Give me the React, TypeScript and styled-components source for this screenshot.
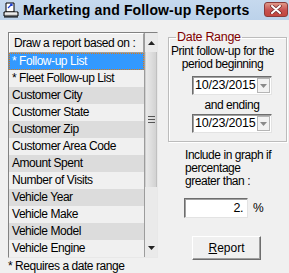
import styled, { createGlobalStyle } from 'styled-components'

const GlobalStyle = createGlobalStyle`
	html, body {
		margin: 0;
		padding: 0;
		background: #f0f0f0;
	}
`

const UI_FONT = `"Liberation Sans", Arial, sans-serif`

const Window = styled.div`
	width: 289px;
	height: 273px;
	overflow: hidden;
	background: #f0f0f0;
	font-family: ${UI_FONT};
	font-size: 12px;
	letter-spacing: -0.45px;
	line-height: 13px;
	text-align: left;
	color: #000;
	display: flex;
	flex-direction: column;
`
const TitleBar = styled.div`
	height: 20px;
	flex: none;
	display: flex;
	align-items: center;
	padding-left: 3px;
	background: linear-gradient(#c6d9ee, #bcd2ea);
`
const Title = styled.div`
	margin-left: 4px;
	font-weight: bold;
	font-size: 14px;
	letter-spacing: 0.15px;
	flex: 1;
	white-space: nowrap;
`
const CloseButton = styled.div`
	width: 22px;
	height: 13px;
	margin-right: 1px;
	margin-top: -2px;
	border: 1px solid #8a3a3a;
	border-radius: 3px;
	background: linear-gradient(#e09a8a, #c75050 55%, #c2473f);
	display: flex;
	align-items: center;
	justify-content: center;
`
const Body = styled.div`
	flex: 1;
	display: flex;
	padding: 12px 0 0 8px;
	gap: 10px;
`
const LeftCol = styled.div`
	display: flex;
	flex-direction: column;
	width: 150px;
`
const ListBox = styled.div`
	height: 226px;
	box-sizing: border-box;
	display: flex;
	border: 1px solid;
	border-color: #828282 #e8e8e8 #e8e8e8 #828282;
`
const ListInner = styled.div`
	width: 135px;
	display: flex;
	flex-direction: column;
`
const ListHeader = styled.div`
	height: 20px;
	box-sizing: border-box;
	padding-left: 4px;
	display: flex;
	align-items: center;
	border: 1px solid;
	border-color: #fff #a0a0a0 #a0a0a0 #fff;
	white-space: nowrap;
`
const Row = styled.div<{ $shade: 'sel' | 'grey' | 'light' }>`
	height: 17px;
	box-sizing: border-box;
	padding-left: 2px;
	display: flex;
	align-items: center;
	white-space: nowrap;
	background: ${(p) =>
		p.$shade === 'sel' ? '#3399ff' : p.$shade === 'grey' ? '#dcdcdc' : '#f0f0f0'};
	color: ${(p) => (p.$shade === 'sel' ? '#fff' : '#000')};
	border: 1px dotted ${(p) => (p.$shade === 'sel' ? '#e07a10' : 'transparent')};
`
const ScrollBar = styled.div`
	width: 13px;
	display: flex;
	flex-direction: column;
	background: #eaeaea;
	border-left: 1px solid #9c9c9c;
	box-sizing: border-box;
`
const ArrowButton = styled.div`
	height: 19px;
	flex: none;
	display: flex;
	align-items: center;
	justify-content: center;
`
const Thumb = styled.div`
	height: 135px;
	flex: none;
	box-sizing: border-box;
	border-left: 1px solid #cfcfcf;
	border-right: 1px solid #c0c0c0;
	background: linear-gradient(90deg, #e9e9e9, #dedede 50%, #d2d2d2);
	display: flex;
	align-items: center;
	justify-content: center;
`
const Track = styled.div`
	flex: 1;
`
const Footnote = styled.div`
	margin-top: 2px;
	white-space: nowrap;
`
const RightCol = styled.div`
	width: 119px;
	display: flex;
	flex-direction: column;
	align-items: flex-start;
`
const GroupBox = styled.fieldset`
	margin: -1px 0 0;
	padding: 0 0 8px;
	width: 119px;
	min-width: 0;
	box-sizing: border-box;
	border: 1px solid #bcbcbc;
	box-shadow: inset 1px 1px 0 #fff, 1px 1px 0 #fff;
	display: flex;
	flex-direction: column;
`
const Legend = styled.legend`
	margin-left: 7px;
	padding: 0 1px;
	color: #800000;
	font-size: 12.5px;
	line-height: 12px;
	letter-spacing: -0.3px;
`
const Caption = styled.div`
	margin: 2px 10px 0 0;
	display: flex;
	flex-direction: column;
	align-items: center;
	white-space: nowrap;
`
const DateStack = styled.div`
	margin-left: 23px;
	width: 80px;
	display: flex;
	flex-direction: column;
	align-items: center;
`
const DateField = styled.div<{ $gap: number }>`
	margin-top: ${(p) => p.$gap}px;
	width: 80px;
	height: 19px;
	box-sizing: border-box;
	background: #fff;
	border: 1px solid;
	border-color: #6d6d6d #e3e3e3 #e3e3e3 #6d6d6d;
	box-shadow: inset 1px 1px 0 #a0a0a0;
	display: flex;
	align-items: center;
	padding-left: 2px;
`
const DateText = styled.span`
	flex: 1;
	font-size: 12.5px;
	letter-spacing: -0.2px;
`
const DropButton = styled.div`
	width: 13px;
	height: 15px;
	margin-right: 1px;
	box-sizing: border-box;
	border: 1px solid #b5b5b5;
	background: #f2f2f2;
	display: flex;
	align-items: center;
	justify-content: center;
`
const SubCaption = styled.div`
	margin-top: 4px;
	white-space: nowrap;
`
const GraphNote = styled.div`
	margin: 7px 0 0 17px;
	display: flex;
	flex-direction: column;
	align-items: flex-start;
	white-space: nowrap;
`
const PercentRow = styled.div`
	margin: 10px 0 0 16px;
	display: flex;
	align-items: center;
	gap: 5px;
`
const PercentField = styled.div`
	width: 64px;
	height: 20px;
	box-sizing: border-box;
	background: #fff;
	border: 1px solid;
	border-color: #6d6d6d #e3e3e3 #e3e3e3 #6d6d6d;
	box-shadow: inset 1px 1px 0 #a0a0a0;
	text-align: right;
	padding-right: 4px;
	font-size: 12.5px;
	line-height: 18px;
`
const ReportButton = styled.div`
	margin: 18px 0 0 24px;
	width: 69px;
	height: 24px;
	box-sizing: border-box;
	border: 1px solid;
	border-color: #fff #6d6d6d #6d6d6d #fff;
	box-shadow: inset -1px -1px 0 #a0a0a0;
	display: flex;
	align-items: center;
	justify-content: center;
	letter-spacing: 0;
`

const reportItems = [
	'* Follow-up List',
	'* Fleet Follow-up List',
	'Customer City',
	'Customer State',
	'Customer Zip',
	'Customer Area Code',
	'Amount Spent',
	'Number of Visits',
	'Vehicle Year',
	'Vehicle Make',
	'Vehicle Model',
	'Vehicle Engine',
]

const AppIcon = () => (
	<svg width="16" height="16" viewBox="0 0 16 16">
		<path d="M3 1 h8 v9 h-8 z" fill="#fff" stroke="#000" />
		<path d="M5 6 l4 -4 M7 2 h2 v2" stroke="#1a3fd0" fill="none" strokeWidth="1.2" />
		<path d="M1 10 h14 v4 h-14 z" fill="#d8d8d8" stroke="#000" />
		<path d="M2 11 h12" stroke="#fff" />
		<path d="M1 15 h14" stroke="#000" />
	</svg>
)

const Arrow = ({ up }: { up?: boolean }) => (
	<svg width="7" height="4" viewBox="0 0 7 4">
		<path d={up ? 'M3.5 0 L7 4 L0 4 z' : 'M0 0 L7 0 L3.5 4 z'} fill="#222" />
	</svg>
)

const Grip = () => (
	<svg width="7" height="7" viewBox="0 0 7 7">
		<path d="M0 0.5 h7 M0 3.5 h7 M0 6.5 h7" stroke="#555" />
	</svg>
)

const SmallDown = () => (
	<svg width="7" height="4" viewBox="0 0 7 4">
		<path d="M0 0 L7 0 L3.5 4 z" fill="#8a8a8a" />
	</svg>
)

const App = () => {
	return (
		<Window>
			<GlobalStyle />
			<TitleBar>
				<AppIcon />
				<Title>Marketing and Follow-up Reports</Title>
				<CloseButton>
					<svg width="12" height="9" viewBox="0 0 12 9">
						<path
							d="M2 1 L10 8 M10 1 L2 8"
							stroke="#6a2a2a"
							strokeWidth="3.4"
							strokeLinecap="round"
						/>
						<path
							d="M2 1 L10 8 M10 1 L2 8"
							stroke="#fff"
							strokeWidth="2"
							strokeLinecap="round"
						/>
					</svg>
				</CloseButton>
			</TitleBar>
			<Body>
				<LeftCol>
					<ListBox>
						<ListInner>
							<ListHeader>Draw a report based on :</ListHeader>
							{reportItems.map((item, index) => (
								<Row
									key={item}
									$shade={
										index === 0
											? 'sel'
											: index % 2 === 0
												? 'grey'
												: 'light'
									}
								>
									{item}
								</Row>
							))}
						</ListInner>
						<ScrollBar>
							<ArrowButton>
								<Arrow up />
							</ArrowButton>
							<Thumb>
								<Grip />
							</Thumb>
							<Track />
							<ArrowButton>
								<Arrow />
							</ArrowButton>
						</ScrollBar>
					</ListBox>
					<Footnote>* Requires a date range</Footnote>
				</LeftCol>
				<RightCol>
					<GroupBox>
						<Legend>Date Range</Legend>
						<Caption>
							<span>Print follow-up for the</span>
							<span>period beginning</span>
						</Caption>
						<DateStack>
							<DateField $gap={5}>
								<DateText>10/23/2015</DateText>
								<DropButton>
									<SmallDown />
								</DropButton>
							</DateField>
							<SubCaption>and ending</SubCaption>
							<DateField $gap={2}>
								<DateText>10/23/2015</DateText>
								<DropButton>
									<SmallDown />
								</DropButton>
							</DateField>
						</DateStack>
					</GroupBox>
					<GraphNote>
						<span>Include in graph if</span>
						<span>percentage</span>
						<span>greater than :</span>
					</GraphNote>
					<PercentRow>
						<PercentField>2.</PercentField>
						<span>%</span>
					</PercentRow>
					<ReportButton>
						<span>
							<u>R</u>eport
						</span>
					</ReportButton>
				</RightCol>
			</Body>
		</Window>
	)
}

export default App
